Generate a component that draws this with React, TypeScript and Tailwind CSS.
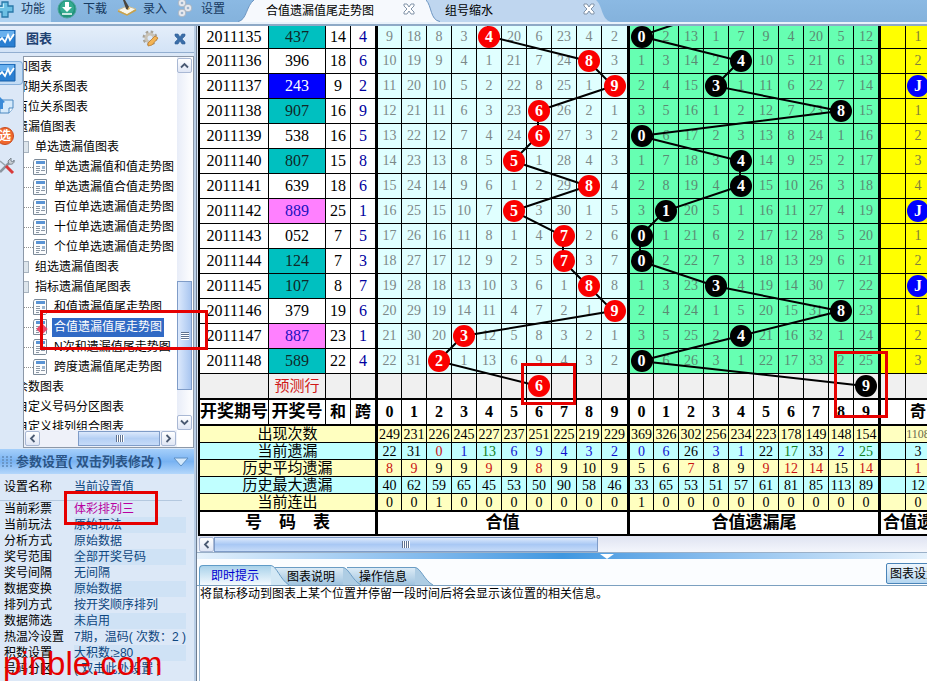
import React from "react";

const SANS = "font-['Liberation_Sans','Noto_Sans_CJK_SC',sans-serif]";
const SERIF = "font-['Liberation_Serif','Noto_Sans_CJK_SC',serif]";

/* ---------- data ---------- */

type Draw = { id: number; code: string; tone: "teal" | "white" | "blue" | "pink"; sum: number; span: number };

const draws: Draw[] = [
  { id: 2011135, code: "437", tone: "teal", sum: 14, span: 4 },
  { id: 2011136, code: "396", tone: "white", sum: 18, span: 6 },
  { id: 2011137, code: "243", tone: "blue", sum: 9, span: 2 },
  { id: 2011138, code: "907", tone: "teal", sum: 16, span: 9 },
  { id: 2011139, code: "538", tone: "white", sum: 16, span: 5 },
  { id: 2011140, code: "807", tone: "teal", sum: 15, span: 8 },
  { id: 2011141, code: "639", tone: "white", sum: 18, span: 6 },
  { id: 2011142, code: "889", tone: "pink", sum: 25, span: 1 },
  { id: 2011143, code: "052", tone: "white", sum: 7, span: 5 },
  { id: 2011144, code: "124", tone: "teal", sum: 7, span: 3 },
  { id: 2011145, code: "107", tone: "teal", sum: 8, span: 7 },
  { id: 2011146, code: "379", tone: "white", sum: 19, span: 6 },
  { id: 2011147, code: "887", tone: "pink", sum: 23, span: 1 },
  { id: 2011148, code: "589", tone: "teal", sum: 22, span: 4 },
];

const toneClass = {
  teal: "bg-[#00c0c0] text-[#102828]",
  white: "bg-white text-black",
  blue: "bg-[#0000ff] text-white",
  pink: "bg-[#ff80ff] text-[#1a10c0]",
};

const sumHits = [4, 8, 9, 6, 6, 5, 8, 5, 7, 7, 8, 9, 3, 2];
const tailHits = [0, 4, 3, 8, 0, 4, 4, 1, 0, 0, 3, 8, 4, 0];
const sumStart = [9, 18, 8, 3, 0, 20, 6, 23, 4, 2];
const tailStart = [0, 2, 13, 1, 7, 9, 4, 20, 5, 12];
const parity = ["1", "2", "J", "1", "2", "3", "4", "J", "1", "2", "J", "1", "2", "3"];

function gaps(start: number[], hits: number[]) {
  const rows = [start];
  for (let i = 1; i < hits.length; i++) {
    rows.push(rows[i - 1].map((v, k) => (hits[i] === k ? 0 : v + 1)));
  }
  return rows;
}
const sumGaps = gaps(sumStart, sumHits);
const tailGaps = gaps(tailStart, tailHits);

type Stat = { label: string; values: string[]; colors: string };
const stats: Stat[] = [
  {
    label: "出现次数",
    values: "249 231 226 245 227 237 251 225 219 229 369 326 302 256 234 223 178 149 148 154 1108".split(" "),
    colors: "kkkkkkkkkkkkkkkkkkkks",
  },
  {
    label: "当前遗漏",
    values: "22 31 0 1 13 6 9 4 3 2 0 6 26 3 1 22 17 33 2 25 3".split(" "),
    colors: "kkrbgbbbbbbbkbbkgkbgk",
  },
  {
    label: "历史平均遗漏",
    values: "8 9 9 9 9 9 8 9 10 9 5 6 7 8 9 9 12 14 15 14 1".split(" "),
    colors: "rrkkrkrkkkkkrkkrrrkrr",
  },
  {
    label: "历史最大遗漏",
    values: "40 62 59 65 45 53 50 90 58 46 33 65 53 51 57 61 81 85 113 89 12".split(" "),
    colors: "kkkkkkkkkkkkkkkkkkkkk",
  },
  {
    label: "当前连出",
    values: "0 0 1 0 0 0 0 0 0 0 1 0 0 0 0 0 0 0 0 0 0".split(" "),
    colors: "kkkkkkkkkkkkkkkkkkkkk",
  },
];
const statColor: Record<string, string> = {
  k: "text-black",
  r: "text-[#c81010]",
  b: "text-[#1010d0]",
  g: "text-[#108020]",
  s: "text-[#6b6b50]",
};

const tree: { level: 0 | 1 | 2; text: string; active?: boolean }[] = [
  { level: 0, text: "和图表" },
  { level: 0, text: "邻期关系图表" },
  { level: 0, text: "百位关系图表" },
  { level: 0, text: "遗漏值图表" },
  { level: 1, text: "单选遗漏值图表" },
  { level: 2, text: "单选遗漏值和值走势图" },
  { level: 2, text: "单选遗漏值合值走势图" },
  { level: 2, text: "百位单选遗漏值走势图" },
  { level: 2, text: "十位单选遗漏值走势图" },
  { level: 2, text: "个位单选遗漏值走势图" },
  { level: 1, text: "组选遗漏值图表" },
  { level: 1, text: "指标遗漏值尾图表" },
  { level: 2, text: "和值遗漏值尾走势图" },
  { level: 2, text: "合值遗漏值尾走势图", active: true },
  { level: 2, text: "N次和遗漏值尾走势图" },
  { level: 2, text: "跨度遗漏值尾走势图" },
  { level: 0, text: "余数图表" },
  { level: 0, text: "自定义号码分区图表" },
  { level: 0, text: "自定义排列组合图表" },
];

const params: [string, string][] = [
  ["当前彩票", "体彩排列三"],
  ["当前玩法", "原始玩法"],
  ["分析方式", "原始数据"],
  ["奖号范围", "全部开奖号码"],
  ["奖号间隔", "无间隔"],
  ["数据变换", "原始数据"],
  ["排列方式", "按开奖顺序排列"],
  ["数据筛选", "未启用"],
  ["热温冷设置", "7期，温码( 次数：2 )"],
  ["积数设置", "大积数:≥80"],
  ["号码分区", "( 双击此处设置 )"],
];

/* ---------- icons ---------- */

const PlusIcon = () => (
  <svg width="16" height="18" viewBox="0 0 16 18" className="shrink-0">
    <path d="M2 2h6v4h5v6H8v5H2v-5h-4V6h4z" fill="#6cc0e4" stroke="#2878a8" strokeWidth="1.3" />
    <path d="M3.500 3.500v4h-5" stroke="#c4ecfa" strokeWidth="1.200" fill="none" />
  </svg>
);
const DownloadIcon = () => (
  <svg width="20" height="20" viewBox="0 0 20 20" className="shrink-0">
    <circle cx="10" cy="9" r="9" fill="#23927c" stroke="#4aa79a" />
    <circle cx="10" cy="8" r="7" fill="#35ab90" />
    <path d="M8 2h4v5h3l-5 5-5-5h3z" fill="#fff" />
    <path d="M5 14h10" stroke="#fff" strokeWidth="1.500" />
  </svg>
);
const BookIcon = () => (
  <svg width="20" height="18" viewBox="0 0 20 18" className="shrink-0">
    <path d="M1 10l9-4 9 3-9 6z" fill="#fbf7ea" stroke="#c8bc94" />
    <path d="M1 11l9 4 9-5" fill="none" stroke="#c8a24c" strokeWidth="1.500" />
    <path d="M6 0h2l4 7-1 3-2-1z" fill="#4a453e" />
    <path d="M10 10l2-3 1 2z" fill="#e0b050" />
  </svg>
);
const GearsIcon = () => (
  <svg width="16" height="18" viewBox="0 0 16 18" className="shrink-0">
    <g fill="#e6e9ee" stroke="#a3adba" strokeWidth=".8">
      <circle cx="5" cy="3" r="3.800" />
      <circle cx="11" cy="8" r="3.800" />
      <circle cx="5" cy="13" r="3.800" />
    </g>
    <g fill="#9fb4cc">
      <circle cx="5" cy="3" r="1.300" />
      <circle cx="11" cy="8" r="1.300" />
      <circle cx="5" cy="13" r="1.300" />
    </g>
  </svg>
);
const ChartIcon = () => (
  <svg width="16" height="18" viewBox="0 0 16 18">
    <path d="M-2 0h17v17H-2z" fill="#2a7fd2" stroke="#1860a8" />
    <path d="M-2 1h16v6H-2z" fill="#68b0ee" />
    <path d="M-1 11l3-3 3 4 3-7 2 5 4-6" stroke="#fff" strokeWidth="1.800" fill="none" />
  </svg>
);
const NoteIcon = () => (
  <svg width="16" height="18" viewBox="0 0 16 18">
    <path d="M0 3h13v8l-4 5H0z" fill="#d6eafb" stroke="#4a88c0" />
    <path d="M9 16v-5h4" fill="#f4faff" stroke="#4a88c0" />
    <path d="M0 0l5 5-2 1v6H0z" fill="#3b8bd8" />
  </svg>
);
const PickIcon = () => (
  <span className="-ml-1 flex size-[18px] items-center justify-center rounded-full border border-[#c84a20] bg-[#f0682e] text-[12px] leading-none font-bold text-white">
    选
  </span>
);
const ToolsIcon = () => (
  <svg width="16" height="18" viewBox="0 0 16 18">
    <path d="M0 15l9-9" stroke="#8b959f" strokeWidth="2.500" />
    <path d="M8 4l3-3 0 3 2 1 1-2c1 3-2 5-5 4z" fill="#c8ced4" stroke="#7d8791" />
    <path d="M0 4l6 5" stroke="#98a2ab" strokeWidth="1.500" />
    <path d="M6 9l7 7" stroke="#d83a3a" strokeWidth="3" />
  </svg>
);
const GearPencilIcon = () => (
  <svg width="18" height="18" viewBox="0 0 18 18">
    <circle cx="8" cy="8" r="6" fill="none" stroke="#a8a296" strokeWidth="3" strokeDasharray="2.400 2.300" />
    <circle cx="8" cy="8" r="4" fill="none" stroke="#c9c3b7" strokeWidth="3" />
    <path d="M6 13l7-7 3 2-6 7-4 1z" fill="#f3b455" stroke="#b97a2c" strokeWidth=".8" />
  </svg>
);
const CloseIcon = ({ light = false }: { light?: boolean }) => (
  <svg width="12" height="12" viewBox="0 0 12 12">
    <path
      d="M1 1h3l2 3 2-3h3v2L8 6l3 3v2H8L6 8l-2 3H1V9l3-3-3-3z"
      fill={light ? "#fff" : "#3b6ea8"}
      stroke={light ? "#8193a8" : "#2f5f98"}
      strokeWidth={light ? 1 : 0.6}
    />
  </svg>
);
const DocIcon = () => (
  <svg width="14" height="16" viewBox="0 0 14 16" className="shrink-0">
    <path d="M1.500.5h12v14l-1 1h-12v-13z" fill="#fbfcfd" stroke="#7c8a98" />
    <path d="M3 2h9v3H3z" fill="#5a94d4" />
    <path d="M3 7.500h4M3 9.500h4M3 11.500h4M8 11.500h4M3 13.500h3" stroke="#8b97a4" />
    <path d="M9 7h3v3H9z" fill="#9db6d0" />
  </svg>
);
const Chevron = ({ d }: { d: string }) => (
  <svg width="9" height="9" viewBox="0 0 9 9">
    <path d={d} fill="none" stroke="#4a5a72" strokeWidth="1.800" />
  </svg>
);
const UP = "M1 6.500l3.500-3.500 3.500 3.500";
const DOWN = "M1 2.500l3.500 3.500 3.500-3.500";
const LEFT = "M6.500 1L3 4.500 6.500 8";
const RIGHT = "M2.500 1L6 4.500 2.500 8";

const SCROLL_BTN =
  "flex size-[15px] shrink-0 items-center justify-center rounded-[2px] border border-[#a9b8d4] bg-gradient-to-b from-white to-[#dfe6f5]";

const Grip = ({ vertical = false }: { vertical?: boolean }) => (
  <span className={vertical ? "flex flex-col gap-px" : "flex gap-px"}>
    {[0, 1, 2, 3].map((i) => (
      <span
        key={i}
        className={vertical ? "h-px w-2 bg-[#5f7290] shadow-[0_1px_0_#fff]" : "h-[7px] w-px bg-[#5f7290] shadow-[1px_0_0_#fff]"}
      />
    ))}
  </span>
);

/* ---------- top bar ---------- */

function TopBar() {
  return (
    <header className="flex h-[26px] shrink-0 flex-col overflow-hidden text-[12px] leading-[18px]">
      <div className="flex h-[22px] items-start bg-gradient-to-b from-[#8bb9e3] to-[#84b2dc] text-[#16395f]">
        <nav className="flex h-[22px] w-[238px] shrink-0">
          <button className="flex w-[51px] items-start gap-[5px] bg-[#aed2f1]">
            <PlusIcon />
            <span>功能</span>
          </button>
          <button className="ml-1.5 flex w-[60px] items-start gap-1.5">
            <DownloadIcon />
            <span>下载</span>
          </button>
          <button className="flex w-[60px] items-start gap-1.5">
            <BookIcon />
            <span>录入</span>
          </button>
          <button className="flex items-start gap-2">
            <GearsIcon />
            <span>设置</span>
          </button>
        </nav>
        <div role="tablist" className="flex min-w-0 flex-1">
          <div role="tab" aria-selected="true" className="relative z-10 flex h-[22px] shrink-0 text-black">
            <svg width="16" height="22" viewBox="0 0 16 22">
              <path d="M0 22C9 20 8 6 16 0v22z" fill="#f6f9fd" />
              <path d="M0 21.500C9 20 8 6 16 0" fill="none" stroke="#6f97c2" />
            </svg>
            <div className="flex w-[172px] items-center bg-[#f6f9fd] pl-3">
              <span className="w-[137px]">合值遗漏值尾走势图</span>
              <button aria-label="关闭" className="pb-1">
                <CloseIcon light />
              </button>
            </div>
            <svg width="16" height="22" viewBox="0 0 16 22">
              <path d="M0 0c6 6 4 20 14 22H0z" fill="#f6f9fd" />
              <path d="M0 0c6 6 4 20 14 21.500" fill="none" stroke="#6f97c2" />
            </svg>
          </div>
          <div role="tab" aria-selected="false" className="-ml-4 flex h-[22px] shrink-0 text-black">
            <div className="flex w-[170px] items-center bg-[#bfd6ef] pl-[19px]">
              <span className="w-[138px]">组号缩水</span>
              <button aria-label="关闭" className="pb-1">
                <CloseIcon light />
              </button>
            </div>
            <svg width="16" height="22" viewBox="0 0 16 22">
              <path d="M0 0c7 6 5 19 15 22H0z" fill="#bfd6ef" />
            </svg>
          </div>
        </div>
      </div>
      <div className="h-0.5 bg-[#e9f2fb]" />
      <div className="h-0.5 bg-[#8ea9c6]" />
    </header>
  );
}

/* ---------- left panel ---------- */

function TreeRow({ level, text, active }: { level: 0 | 1 | 2; text: string; active?: boolean }) {
  return (
    <li className="flex h-5 shrink-0 items-center whitespace-nowrap">
      {level === 1 && <span className="mr-1.5 h-3 w-[13px] shrink-0 border border-[#a8b4c0] bg-[#dde5ec]" />}
      {level === 2 && (
        <>
          <span className="w-[17px] shrink-0 border-t border-dotted border-[#909090]" />
          <span className="relative mr-[5px] flex">
            <DocIcon />
            {active && <span className="absolute top-1.5 left-[5px] size-2 rotate-45 bg-[#ee4a6a]" />}
          </span>
        </>
      )}
      <button className={active ? "h-[19px] bg-[#316ac5] px-0.5 text-white" : level === 2 ? "h-[19px] pl-0.5" : "h-[19px]"}>
        {text}
      </button>
    </li>
  );
}

function TreePanel() {
  return (
    <div className="flex min-h-0 flex-1">
      <nav className="flex w-[23px] shrink-0 flex-col gap-3 pt-2">
        <button className="flex h-[24px] items-center rounded-r border border-l-0 border-[#86b0dc] bg-[#c3dcf5]" aria-label="图表">
          <ChartIcon />
        </button>
        <button aria-label="记录">
          <NoteIcon />
        </button>
        <button aria-label="选号">
          <PickIcon />
        </button>
        <button aria-label="工具">
          <ToolsIcon />
        </button>
      </nav>
      <div className="mt-[3px] mb-px flex min-w-0 flex-1 border border-[#8c98a8] bg-white">
        <div className="flex min-w-0 flex-1 flex-col">
          <div className="min-h-0 flex-1 overflow-hidden">
            <ul className="-ml-2 text-[12px] leading-[19px] text-black">
              {tree.map((t) => (
                <TreeRow key={t.text} {...t} />
              ))}
            </ul>
          </div>
          <div className="flex h-[17px] shrink-0 items-center bg-[#eef1f9] px-px">
            <button className={SCROLL_BTN} aria-label="向左">
              <Chevron d={LEFT} />
            </button>
            <div className="flex flex-1 justify-end pr-px">
              <div className="flex h-[15px] w-[82px] items-center justify-center border border-[#7f9cc8] bg-gradient-to-b from-[#dce9fc] via-[#b4cff4] to-[#c6dbf8]">
                <Grip />
              </div>
            </div>
            <button className={SCROLL_BTN} aria-label="向右">
              <Chevron d={RIGHT} />
            </button>
          </div>
        </div>
        <div className="mb-[17px] flex w-[16px] shrink-0 flex-col bg-gradient-to-r from-[#e8edf8] to-white pt-px">
          <button className={SCROLL_BTN} aria-label="向上">
            <Chevron d={UP} />
          </button>
          <div className="flex-[208]" />
          <div className="flex w-[15px] flex-[107] items-center justify-center border border-[#7f9cc8] bg-gradient-to-r from-[#dce9fc] to-[#a9c6f0]">
            <Grip vertical />
          </div>
          <div className="flex-[25]" />
          <button className={SCROLL_BTN} aria-label="向下">
            <Chevron d={DOWN} />
          </button>
        </div>
      </div>
    </div>
  );
}

function ParamPanel() {
  return (
    <section className="shrink-0 text-[12px] leading-4">
      <div className="flex h-[25px] items-center bg-gradient-to-b from-[#a5cffa] via-[#78b2f2] to-[#b4d7fb] pl-0.5">
        <svg width="14" height="14" viewBox="0 0 14 14" fill="#6a96c6" className="shrink-0">
          {[1, 5, 9].map((x) => [1, 4, 7, 10].map((y) => <rect key={`${x}-${y}`} x={x - 1} y={y} width="2" height="2" />))}
        </svg>
        <h2 className="w-[157px] shrink-0 text-[13px] font-bold whitespace-pre text-[#2b5586]">参数设置( 双击列表修改 )</h2>
        <svg width="16" height="10" viewBox="0 0 16 10" className="shrink-0">
          <path d="M1 1h14L8 9z" fill="#d4e9fc" stroke="#5e90c4" />
        </svg>
      </div>
      <dl className="pb-1">
        <div className="mr-3 flex h-[27px] items-center border-b border-[#b4c8df] pl-1">
          <dt className="w-[70px] shrink-0 text-black">设置名称</dt>
          <dd className="text-[#0d4680]">当前设置值</dd>
        </div>
        {params.map(([name, value], i) => (
          <div key={name} className="flex h-4 items-center pr-2 pl-1 whitespace-nowrap">
            <dt className="w-[70px] shrink-0 text-black">{name}</dt>
            <dd
              className={
                i === 0
                  ? "flex-1 text-[#b800a0]"
                  : i % 2
                    ? "flex-1 bg-[#cfe2f5] text-[#0d4680]"
                    : "flex-1 text-[#0d4680]"
              }
            >
              {value}
            </dd>
          </div>
        ))}
      </dl>
    </section>
  );
}

function LeftPanel() {
  return (
    <aside className="flex w-[197px] shrink-0 border-r border-[#6d7c90] bg-[#b9cee6]">
      <div className="flex w-[194px] flex-col bg-[#dce8f7]">
        <div className="flex h-[27px] shrink-0 items-center border-b border-[#92aed0] bg-gradient-to-b from-[#e4eefa] to-[#d3e3f6]">
          <ChartIcon />
          <h1 className="ml-2.5 flex-1 text-[13px] font-bold text-[#1f4272]">图表</h1>
          <button aria-label="设置" className="mr-3.5">
            <GearPencilIcon />
          </button>
          <button aria-label="关闭" className="mr-2">
            <CloseIcon />
          </button>
        </div>
        <TreePanel />
        <ParamPanel />
      </div>
    </aside>
  );
}

/* ---------- chart ---------- */

const THICK = "border-r-[3px]";
const edge = (k: number) => (k === 9 ? THICK : "border-r");

function Ball({ children, tone }: { children: React.ReactNode; tone: "red" | "black" | "blue" }) {
  const bg = tone === "red" ? "bg-[#fa0000]" : tone === "black" ? "bg-black" : "bg-[#0000ff]";
  return (
    <span
      className={`relative z-20 mx-auto flex size-[22px] items-center justify-center rounded-full text-[16px] leading-none font-bold text-white ${bg}`}
    >
      {children}
    </span>
  );
}

const digits = [0, 1, 2, 3, 4, 5, 6, 7, 8, 9];
const points = (hits: number[], left: number, first: number) =>
  hits.map((h, i) => `${left + 25 * h},${first + 25 * i}`).join(" ");

function TrendTable() {
  return (
    <div className="relative shrink-0 overflow-hidden border-l-2 border-black bg-white">
      <table
        className={`w-[731px] table-fixed border-separate border-spacing-0 text-center whitespace-nowrap [&_td]:border-black [&_td]:p-0 [&_th]:border-black [&_th]:p-0 ${SERIF}`}
      >
        <colgroup>
          <col className="w-[69px]" />
          <col className="w-[57px]" />
          <col className="w-[25px]" />
          <col className="w-[27px]" />
          <col className="w-[24px]" />
          <col span={8} className="w-[25px]" />
          <col className="w-[28px]" />
          <col className="w-[24px]" />
          <col span={8} className="w-[25px]" />
          <col className="w-[27px]" />
          <col span={2} className="w-[25px]" />
        </colgroup>
        <tbody className="text-[16px] leading-[20px]">
          {draws.map((d, i) => (
            <tr key={d.id} className={i === 0 ? "h-[23px]" : "h-[25px]"}>
              <td className="border-r border-b">{d.id}</td>
              <td className={`border-r border-b ${toneClass[d.tone]}`}>{d.code}</td>
              <td className="border-r border-b">{d.sum}</td>
              <td className={`border-b text-[#0000a0] ${THICK}`}>{d.span}</td>
              {digits.map((k) => (
                <td key={k} className={`border-b bg-[#e0ffff] text-[14px] text-[#7c8888] ${edge(k)}`}>
                  {sumHits[i] === k ? <Ball tone="red">{k}</Ball> : sumGaps[i][k]}
                </td>
              ))}
              {digits.map((k) => (
                <td key={k} className={`border-b bg-[#66ffb2] text-[14px] text-[#5b8a72] ${edge(k)}`}>
                  {tailHits[i] === k ? <Ball tone="black">{k}</Ball> : tailGaps[i][k]}
                </td>
              ))}
              <td className="border-r border-b bg-[#ffff00]" />
              <td className="border-r border-b bg-[#ffff00] text-[14px] text-[#80803c]">
                {parity[i] === "J" ? <Ball tone="blue">J</Ball> : parity[i]}
              </td>
            </tr>
          ))}
          <tr className="h-[26px] bg-[#f0f0f0]">
            <td className="border-r border-b-2" />
            <td className="border-r border-b-2 text-[15px] text-[#d01818]">预测行</td>
            <td className="border-r border-b-2" />
            <td className={`border-b-2 ${THICK}`} />
            {digits.map((k) => (
              <td key={k} className={`border-b-2 ${edge(k)}`}>
                {k === 6 && <Ball tone="red">6</Ball>}
              </td>
            ))}
            {digits.map((k) => (
              <td key={k} className={`border-b-2 ${edge(k)}`}>
                {k === 9 && <Ball tone="black">9</Ball>}
              </td>
            ))}
            <td className="border-r border-b-2" />
            <td className="border-r border-b-2" />
          </tr>
          <tr className="h-[26px]">
            <th className="border-r border-b-2 text-[17px]">开奖期号</th>
            <th className="border-r border-b-2 text-[17px]">开奖号</th>
            <th className="border-r border-b-2">和</th>
            <th className={`border-b-2 ${THICK}`}>跨</th>
            {digits.map((k) => (
              <th key={k} className={`border-b-2 ${edge(k)}`}>
                {k}
              </th>
            ))}
            {digits.map((k) => (
              <th key={k} className={`border-b-2 ${edge(k)}`}>
                {k}
              </th>
            ))}
            <th className="border-r border-b-2" />
            <th className="border-r border-b-2">奇</th>
          </tr>
        </tbody>
        <tfoot className="text-[14px] leading-[15px]">
          {stats.map((s, r) => {
            const line = r === 4 ? "border-b-2" : "border-b";
            return (
              <tr key={s.label} className={`${r === 4 ? "h-[18px]" : "h-[17px]"} ${r % 2 ? "bg-[#c0ffff]" : "bg-[#ffffc0]"}`}>
                <th colSpan={4} className={`text-[15px] font-normal ${line} ${THICK}`}>
                  {s.label}
                </th>
                {s.values.slice(0, 20).map((v, k) => (
                  <td key={k} className={`${line} ${edge(k % 10)} ${statColor[s.colors[k]]}`}>
                    {v}
                  </td>
                ))}
                <td className={`border-r ${line}`} />
                <td className={`border-r ${line} ${statColor[s.colors[20]]} ${r === 0 ? "text-[12px]" : ""}`}>{s.values[20]}</td>
              </tr>
            );
          })}
          <tr className="h-[24px] text-[17px] leading-[20px]">
            <th colSpan={4} className={`border-b-2 whitespace-pre ${THICK}`}>
              {"号    码    表"}
            </th>
            <th colSpan={10} className={`border-b-2 ${THICK}`}>
              合值
            </th>
            <th colSpan={10} className={`border-b-2 ${THICK}`}>
              合值遗漏尾
            </th>
            <th colSpan={2} className="overflow-hidden border-r border-b-2 text-left">
              <span className="pl-0.5">合值遗漏</span>
            </th>
          </tr>
        </tfoot>
      </table>
      <svg className="absolute inset-0 z-10 h-full w-full" fill="none" stroke="#000" strokeWidth="2">
        <polyline points={points([4, ...sumHits, 6], 188, -15)} />
        <polyline points={points([3, ...tailHits, 9], 440, -15)} />
      </svg>
    </div>
  );
}

/* ---------- bottom information panel ---------- */

function InfoTab({ label, active, shape }: { label: string; active?: boolean; shape: string }) {
  return (
    <button
      role="tab"
      aria-selected={!!active}
      className={`relative flex items-stretch ${shape} ${active ? "h-[20px] text-[#0000d0]" : "-ml-3.5 h-[18px] text-black"}`}
    >
      <span
        className={
          active
            ? "flex items-center rounded-tl border-t border-l border-[#5f9cc8] bg-gradient-to-b from-[#a9d2ea] to-[#f4fafe] pr-3 pl-[11px]"
            : "flex items-center border-t border-[#6a9cc4] bg-gradient-to-b from-[#dcebf6] to-[#9fc3de] pr-2 pl-3"
        }
      >
        {label}
      </span>
      <svg width="18" viewBox="0 0 18 20" preserveAspectRatio="none" className="h-full">
        <path d="M0 0c6 1 9 14 18 20H0z" fill={active ? "#d3e8f5" : "#aecde4"} />
        <path d="M0 .5c6 1 9 14 18 19.500" fill="none" stroke="#6a9cc4" />
      </svg>
    </button>
  );
}

function InfoPanel() {
  return (
    <section className="flex min-h-0 flex-1 flex-col bg-[#fbfdff] text-[12px] leading-4">
      <div className="flex h-[27px] shrink-0 items-end border-b border-[#7ba0c0] pl-0.5">
        <div role="tablist" className="flex flex-1 items-end">
          <InfoTab label="即时提示" active shape="z-20" />
          <InfoTab label="图表说明" shape="z-10" />
          <InfoTab label="操作信息" shape="z-0" />
        </div>
        <div className="flex w-[41px] shrink-0 self-start overflow-hidden pt-1">
          <button className="h-[21px] shrink-0 rounded-[2px] border border-[#4a84b8] bg-gradient-to-b from-[#eef6fd] to-[#b4d6f0] px-[3px] whitespace-nowrap text-black">
            图表设置
          </button>
        </div>
      </div>
      <p className="ml-0.5 flex-1 border-l border-[#9ab4cc] bg-white text-black">
        将鼠标移动到图表上某个位置并停留一段时间后将会显示该位置的相关信息。
      </p>
    </section>
  );
}

function MainArea() {
  return (
    <main className="flex min-w-0 flex-1 flex-col overflow-hidden bg-[#dfeaf6]">
      <div className="flex shrink-0 flex-col pl-px">
        <TrendTable />
        <div className="flex h-[16px] items-center bg-gradient-to-b from-[#dfe3f1] to-[#f4f6fc] pl-px">
          <button className={SCROLL_BTN} aria-label="向左">
            <Chevron d={LEFT} />
          </button>
          <div className="flex h-[15px] flex-[383] items-center justify-center border border-[#7f9cc8] bg-gradient-to-b from-[#dce9fc] via-[#a9c8f4] to-[#c6dbf8]">
            <Grip />
          </div>
          <div className="flex-[330]" />
        </div>
      </div>
      <div className="flex h-[7px] shrink-0 items-center border-t border-[#9ab0c8] bg-gradient-to-r from-[#e4f1fc] via-[#3f97e0] via-50% to-[#e4f1fc]">
        <div className="flex-[403]" />
        <svg width="14" height="5" viewBox="0 0 14 5">
          <path d="M0 0h14L7 5z" fill="#fff" />
        </svg>
        <div className="flex-[313]" />
      </div>
      <InfoPanel />
    </main>
  );
}

/* ---------- page ---------- */

export default function App() {
  return (
    <div className={`relative flex h-screen w-full flex-col overflow-hidden ${SANS}`}>
      <TopBar />
      <div className="flex min-h-0 flex-1">
        <LeftPanel />
        <MainArea />
      </div>
      <div className="pointer-events-none absolute top-[310px] left-[40px] z-30 h-[40px] w-[168px] border-[3px] border-[#e60000]" />
      <div className="pointer-events-none absolute top-[491px] left-[64px] z-30 h-[34px] w-[94px] border-[3px] border-[#e60000]" />
      <div className="pointer-events-none absolute top-[363px] left-[521px] z-30 h-[42px] w-[55px] border-[3px] border-[#e60000]" />
      <div className="pointer-events-none absolute top-[351px] left-[834px] z-30 h-[67px] w-[54px] border-[3px] border-[#e60000]" />
      <div className="pointer-events-none absolute bottom-0 left-[3px] z-30 text-[33px] leading-[34px] text-[#e60000]">pinble.com</div>
    </div>
  );
}
